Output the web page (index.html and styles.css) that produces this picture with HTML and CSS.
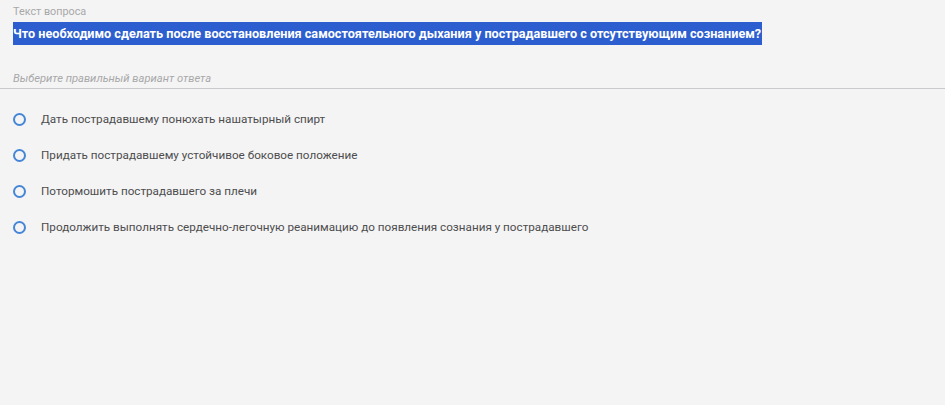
FILE: index.html
```html
<!DOCTYPE html>
<html lang="ru">
<head>
    <meta charset="UTF-8">
    <meta name="viewport" content="width=device-width, initial-scale=1.0">
    <title>Вопрос теста</title>
    <link rel="stylesheet" href="styles.css">
</head>
<body>
    <!-- Question header -->
    <div class="question">
        <div class="q-label">Текст вопроса</div>
        <div class="q-text"><span class="selected">Что необходимо сделать после восстановления самостоятельного дыхания у пострадавшего с отсутствующим сознанием?</span></div>
        <div class="hint">Выберите правильный вариант ответа</div>
    </div>

    <!-- Answer options -->
    <div class="options">
        <label class="option"><span class="radio"></span>Дать пострадавшему понюхать нашатырный спирт</label>
        <label class="option"><span class="radio"></span>Придать пострадавшему устойчивое боковое положение</label>
        <label class="option"><span class="radio"></span>Потормошить пострадавшего за плечи</label>
        <label class="option"><span class="radio"></span>Продолжить выполнять сердечно-легочную реанимацию до появления сознания у пострадавшего</label>
    </div>
</body>
</html>
```

FILE: styles.css
```css
body {
    margin: 0;
    background-color: #f4f4f5;
    font-family: Roboto, 'Noto Sans', sans-serif;
    color: #4a4a4a;
}
.question {
    padding-top: 5px;
    border-bottom: 1px solid #c8c9cc;
}
.q-label {
    padding: 0 13px;
    font-size: 10.8px;
    line-height: 14px;
    color: #a8a8a8;
}
.q-text {
    padding: 0 13px;
    margin-top: 3px;
    font-size: 12.65px;
    font-weight: bold;
    line-height: 23px;
}
/* Selected text look */
.selected {
    display: inline-block;
    background-color: #2c5ecf;
    color: #fff;
    padding-right: 1px;
}
.hint {
    padding: 0 13px 2px;
    margin-top: 26px;
    font-size: 11.2px;
    line-height: 15px;
    font-style: italic;
    color: #a8a8a8;
}
.options {
    margin-top: 12px;
    padding: 0 13px;
}
.option {
    display: flex;
    align-items: center;
    height: 36px;
    font-size: 11.7px;
    color: #4d4d4d;
    cursor: pointer;
}
.radio {
    width: 13px;
    height: 13px;
    box-sizing: border-box;
    border: 2px solid #4586d6;
    border-radius: 50%;
    margin-right: 15px;
    flex-shrink: 0;
}
```
